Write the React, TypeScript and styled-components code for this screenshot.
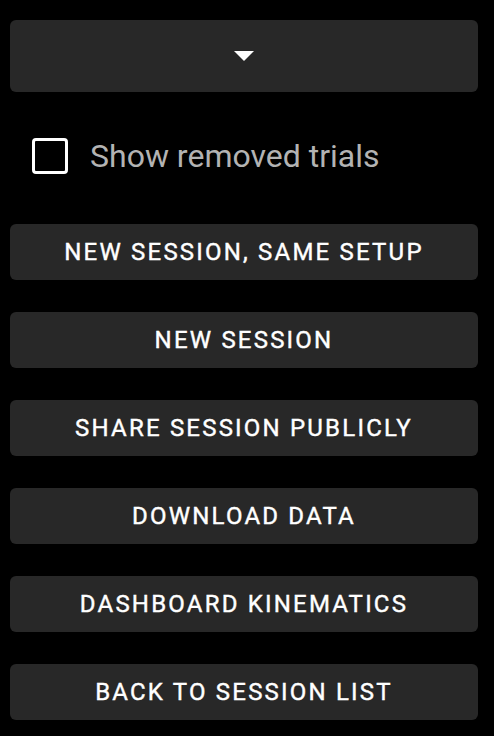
import React from "react";
import styled, { createGlobalStyle } from "styled-components";

const Global = createGlobalStyle`
  html, body { margin: 0; padding: 0; background: #000; }
  body { font-family: Roboto, "Noto Sans", sans-serif; }
`;

const Panel = styled.div`
  width: 494px;
  height: 736px;
  box-sizing: border-box;
  padding: 20px 16px 0 10px;
  display: flex;
  flex-direction: column;
  background: #000;
`;

const SelectBox = styled.div`
  height: 72px;
  border-radius: 6px;
  background: #282828;
  display: flex;
  align-items: center;
  justify-content: center;
`;

const CheckRow = styled.label`
  display: flex;
  align-items: center;
  gap: 22px;
  height: 36px;
  margin: 46px 0 0 22px;
`;

const Box = styled.span`
  width: 36px;
  height: 36px;
  box-sizing: border-box;
  border: 3.5px solid #fff;
  border-radius: 4px;
`;

const CheckLabel = styled.span`
  font-size: 32px;
  color: #b3b3b3;
  font-weight: 400;
`;

const ButtonList = styled.div`
  display: flex;
  flex-direction: column;
  gap: 32px;
  margin-top: 50px;
`;

const Button = styled.button`
  height: 56px;
  border: none;
  border-radius: 6px;
  background: #282828;
  color: #fff;
  font-family: Roboto, "Noto Sans", sans-serif;
  font-weight: 400;
  font-size: 24px;
  letter-spacing: 2.2px;
  text-transform: uppercase;
  display: flex;
  align-items: center;
  justify-content: center;
  padding: 0;
  -webkit-text-stroke: 0.4px #fff;
`;

const labels = [
  "New session, same setup",
  "New session",
  "Share session publicly",
  "Download data",
  "Dashboard kinematics",
  "Back to session list",
];

export default function App() {
  return (
    <>
      <Global />
      <Panel>
        <SelectBox>
          <svg width="20" height="10" viewBox="0 0 20 10">
            <path d="M0 0 L10 10 L20 0 Z" fill="#fff" />
          </svg>
        </SelectBox>
        <CheckRow>
          <Box />
          <CheckLabel>Show removed trials</CheckLabel>
        </CheckRow>
        <ButtonList>
          {labels.map((l) => (
            <Button key={l}>{l}</Button>
          ))}
        </ButtonList>
      </Panel>
    </>
  );
}
